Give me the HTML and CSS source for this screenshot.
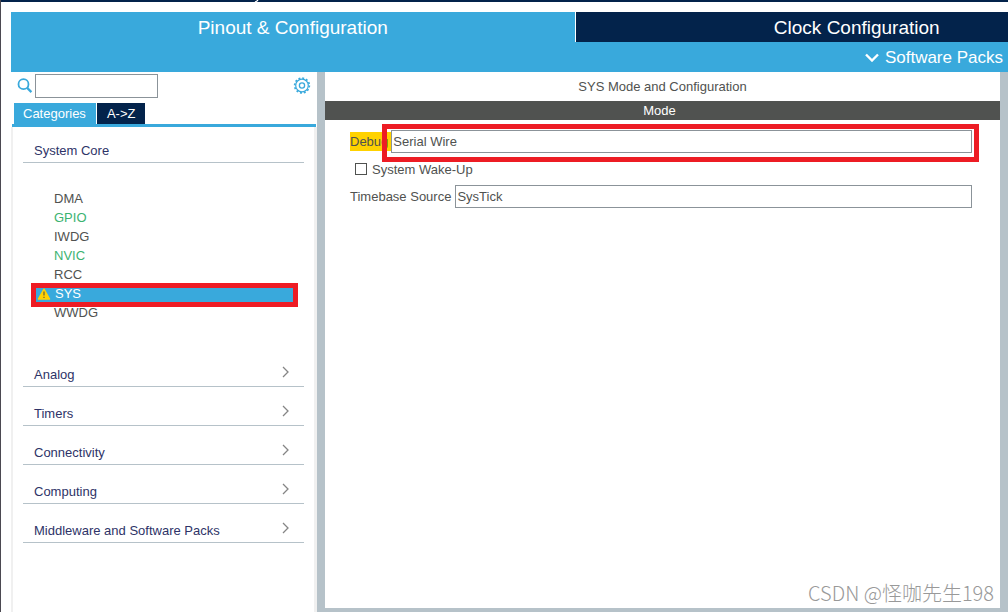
FILE: index.html
```html
<!DOCTYPE html>
<html lang="en">
<head>
<meta charset="utf-8">
<meta name="viewport" content="width=device-width, initial-scale=1">
<title>Pinout &amp; Configuration</title>
<link rel="stylesheet" href="styles.css">
</head>
<body>
<div class="app">
  <div class="top-strip"><svg class="strip-mark" width="5" height="2" viewBox="0 0 5 2" aria-hidden="true"><path d="M1 2 3 1 4 0" fill="none" stroke="#fff" stroke-width="1.3"/></svg></div>
  <header class="header">
    <nav class="main-tabs">
      <button class="main-tab main-tab-active" type="button">Pinout &amp; Configuration</button>
      <button class="main-tab" type="button">Clock Configuration</button>
    </nav>
    <div class="toolbar">
      <button class="packs" type="button">
        <svg width="14" height="9" viewBox="0 0 14 9" aria-hidden="true"><path d="M1 1.5 7 7.5 13 1.5" fill="none" stroke="#fff" stroke-width="2.4"/></svg>
        Software Packs
      </button>
    </div>
  </header>
  <div class="workspace">
    <aside class="sidebar">
      <div class="search-row">
        <label class="search-label" for="search" aria-label="Search">
          <svg width="16" height="16" viewBox="0 0 16 16" aria-hidden="true"><circle cx="6.5" cy="6.2" r="5" fill="none" stroke="#39a9dc" stroke-width="1.8"/><path d="m10.2 9.9 4.2 4.2" stroke="#39a9dc" stroke-width="2.2"/></svg>
        </label>
        <input class="search" id="search" type="text">
        <button class="settings" type="button" aria-label="Settings">
          <svg width="18" height="18" viewBox="0 0 18 18" fill="none" stroke="#39a9dc" aria-hidden="true"><circle cx="9" cy="8.5" r="7.4" stroke-width="1.6" stroke-dasharray="1.94 1.94"/><circle cx="9" cy="8.5" r="6.3" stroke-width="1.2"/><circle cx="9" cy="8.5" r="2.6" stroke-width="1.3"/></svg>
        </button>
      </div>
      <div class="view-tabs">
        <button class="view-tab view-tab-active" type="button">Categories</button>
        <button class="view-tab" type="button">A-&gt;Z</button>
      </div>
      <div class="tree">
        <button class="category" type="button">System Core</button>
        <ul class="peripherals">
          <li class="item">DMA</li>
          <li class="item item-on">GPIO</li>
          <li class="item">IWDG</li>
          <li class="item item-on">NVIC</li>
          <li class="item">RCC</li>
          <li class="item item-selected"><svg class="warning" width="14" height="12" viewBox="0 0 14 12" aria-hidden="true"><path d="M7 1.2 12.6 11H1.4Z" fill="#ffd200" stroke="#ffd200" stroke-width="1.4" stroke-linejoin="round"/><path d="M7 3.5v4M7 8.8v1.3" stroke="#665f35" stroke-width="1.2"/></svg>SYS</li>
          <li class="item">WWDG</li>
        </ul>
        <button class="category" type="button">Analog<svg class="chevron" width="8" height="12" viewBox="0 0 8 12" aria-hidden="true"><path d="m1 1 5 5-5 5"/></svg></button>
        <button class="category" type="button">Timers<svg class="chevron" width="8" height="12" viewBox="0 0 8 12" aria-hidden="true"><path d="m1 1 5 5-5 5"/></svg></button>
        <button class="category" type="button">Connectivity<svg class="chevron" width="8" height="12" viewBox="0 0 8 12" aria-hidden="true"><path d="m1 1 5 5-5 5"/></svg></button>
        <button class="category" type="button">Computing<svg class="chevron" width="8" height="12" viewBox="0 0 8 12" aria-hidden="true"><path d="m1 1 5 5-5 5"/></svg></button>
        <button class="category" type="button">Middleware and Software Packs<svg class="chevron" width="8" height="12" viewBox="0 0 8 12" aria-hidden="true"><path d="m1 1 5 5-5 5"/></svg></button>
      </div>
    </aside>
    <main class="panel">
      <h1 class="panel-title">SYS Mode and Configuration</h1>
      <h2 class="mode-title">Mode</h2>
      <form class="form">
        <div class="field field-marked">
          <label class="label label-highlight" for="debug">Debug</label>
          <select class="select" id="debug"><option>Serial Wire</option></select>
        </div>
        <div class="check-row">
          <input class="check" id="wakeup" type="checkbox">
          <label for="wakeup">System Wake-Up</label>
        </div>
        <div class="field">
          <label class="label" for="timebase">Timebase Source</label>
          <select class="select" id="timebase"><option>SysTick</option></select>
        </div>
      </form>
      <div class="watermark">CSDN @怪咖先生198</div>
    </main>
  </div>
</div>
</body>
</html>
```

FILE: styles.css
```css
* { box-sizing: border-box; }
body {
  margin: 0;
  background: #fff;
  color: #505250;
  font: 13px/19px "Liberation Sans", "Noto Sans CJK SC", sans-serif;
}
button, input, select { font: inherit; color: inherit; margin: 0; border-radius: 0; }
button { border: 0; padding: 0; background: none; }
.app {
  min-height: 100vh;
  display: flex;
  flex-direction: column;
  border-left: 1px solid #4b4951;
  overflow: hidden;
}
.top-strip { height: 2px; background: #03234b; display: flex; padding-left: 253px; }
.header { margin: 10px 0 0 10px; background: #39a9dc; color: #fff; overflow: hidden; }
.main-tabs {
  width: calc(100% + 130px);
  display: grid;
  grid-template-columns: 1fr 1fr;
}
.main-tab { height: 30px; font-size: 19px; background: #03234b; border-left: 1px solid #fff; }
.main-tab-active { background: #39a9dc; border-left: 0; }
.toolbar { height: 30px; display: flex; justify-content: flex-end; padding-right: 5px; }
.packs { display: flex; align-items: center; gap: 6px; font-size: 17px; }
.workspace { flex: 1; display: flex; margin-left: 10px; }
.sidebar { width: 306px; flex: none; display: flex; flex-direction: column; }
.search-row { display: flex; align-items: center; height: 28px; padding: 0 6px; }
.search-label { display: flex; width: 18px; }
.search { width: 123px; height: 24px; border: 1px solid #8b9399; background: #fff; padding: 0 3px; }
.settings { display: flex; margin-left: auto; }
.view-tabs {
  display: flex;
  gap: 1px;
  margin: 3px 1px 0;
  padding-left: 2px;
  border-bottom: 3px solid #39a9dc;
}
.view-tab { height: 21px; padding: 0 10px; background: #03234b; color: #fff; }
.view-tab-active { padding-left: 9px; background: #39a9dc; }
.tree {
  flex: 1;
  padding: 0 10px;
  border: solid #f0f0f0;
  border-width: 0 3px 0 2px;
  display: flex;
  flex-direction: column;
}
.category {
  flex: none;
  display: flex;
  align-items: flex-end;
  justify-content: space-between;
  height: 39px;
  padding: 0 14px 2px 11px;
  border-bottom: 1px solid #b6c2c9;
  color: #2e3367;
  text-align: left;
}
.tree > .category:first-child { height: 36px; }
.chevron { margin-bottom: 6px; fill: none; stroke: #858585; stroke-width: 1.3; }
.peripherals { list-style: none; margin: 0; padding: 26px 0 26px; }
.item { height: 19px; padding-left: 31px; }
.item-on { color: #3cb371; }
.item-selected {
  position: relative;
  display: flex;
  align-items: center;
  gap: 4px;
  margin: 0 7px 0 9px;
  padding-left: 5px;
  background: #39a9dc;
  color: #fff;
}
.item-selected::after {
  content: "";
  position: absolute;
  inset: -1px -1px -4px;
  border: 5px solid #ed1c24;
}
.panel {
  flex: 1;
  min-width: 0;
  position: relative;
  border: solid #b6c2c9;
  border-width: 0 8px 4px;
}
.panel-title, .mode-title { margin: 0; font-size: 13px; font-weight: 400; text-align: center; }
.panel-title { padding: 5px 0; line-height: 19px; }
.mode-title { background: #505250; color: #fff; line-height: 19px; padding-right: 6px; }
.form { padding: 10px 28px 0 25px; display: flex; flex-direction: column; gap: 4px; }
.field { position: relative; display: flex; align-items: center; }
.label { padding-right: 4px; }
.label-highlight { background: #ffd200; padding-right: 3px; }
.select {
  flex: 1;
  min-width: 0;
  height: 23px;
  appearance: none;
  border: 1px solid #8b9399;
  background: #fff;
  padding: 0 1px;
}
.field-marked::after {
  content: "";
  position: absolute;
  inset: -6px -7px -9px 32px;
  border: 5px solid #ed1c24;
}
.check-row { display: flex; align-items: center; gap: 5px; height: 24px; padding-left: 5px; }
.check { appearance: none; width: 12px; height: 12px; border: 1px solid #505250; background: #fff; }
.watermark {
  position: absolute;
  right: 6px;
  bottom: 2px;
  color: #999;
  font-family: "Noto Sans CJK SC", sans-serif;
  font-size: 20px;
  font-weight: 300;
  line-height: 26px;
}
```
